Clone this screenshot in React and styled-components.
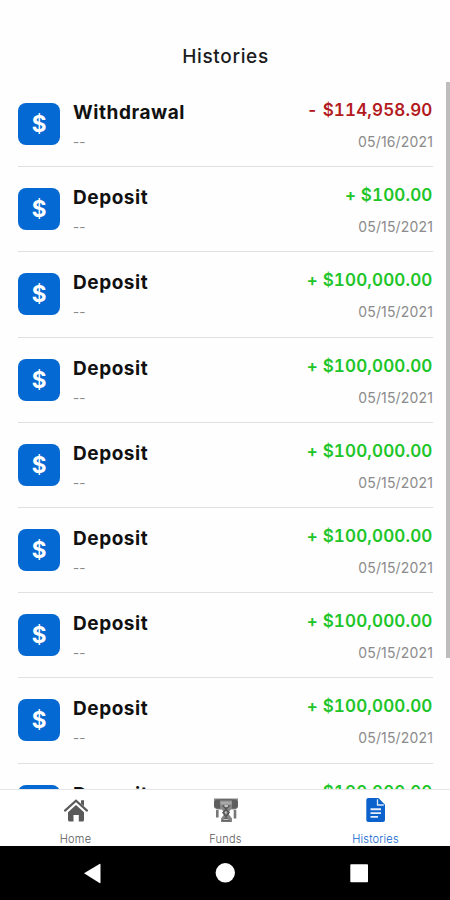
import React, { useState } from "react";
import styled, { createGlobalStyle } from "styled-components";

const GlobalStyle = createGlobalStyle`
  * {
    box-sizing: border-box;
  }
  body {
    margin: 0;
    background: #fff;
    font-family: Inter, "Liberation Sans", sans-serif;
  }
`;

const Screen = styled.div`
  position: relative;
  width: 450px;
  height: 900px;
  display: flex;
  flex-direction: column;
  overflow: hidden;
  background-color: #fefefe;
`;

const Header = styled.header`
  flex: 0 0 82px;
  padding-top: 44px;
  text-align: center;
`;

const Title = styled.h1`
  margin: 0;
  padding-left: 1px;
  font-size: 19px;
  line-height: 26px;
  font-weight: 500;
  letter-spacing: 0.65px;
  color: #1c1c1e;
`;

const List = styled.main`
  flex: 1 1 0;
  min-height: 0;
  overflow: hidden;
  padding: 0 17px 0 18px;
`;

const Row = styled.div`
  display: flex;
  height: 85.2px;
  padding-top: 21px;
  border-bottom: 1.5px solid #e0e0e1;
`;

const IconBox = styled.div`
  flex: 0 0 42px;
  height: 42px;
  border-radius: 8px;
  display: flex;
  align-items: center;
  justify-content: center;
  background-color: #0569d3;
  color: #fff;
  font-size: 22.5px;
  line-height: 42px;
  font-weight: 700;
`;

const Column = styled.div`
  display: flex;
  flex-direction: column;
  margin-left: ${(props) => (props.$right ? "auto" : "13px")};
  align-items: ${(props) => (props.$right ? "flex-end" : "flex-start")};
`;

const Name = styled.span`
  margin-top: -3px;
  height: 29px;
  font-size: 19px;
  line-height: 26px;
  font-weight: 650;
  letter-spacing: 0.55px;
  color: #111;
`;

const Note = styled.span`
  padding-top: 1px;
  font-size: 13.5px;
  line-height: 24px;
  color: #8b8b8b;
`;

const Amount = styled.span`
  margin-top: -5px;
  height: 31px;
  font-size: 17px;
  line-height: 25px;
  font-weight: 600;
  font-variant-numeric: tabular-nums;
  letter-spacing: 0.15px;
  margin-right: 0.5px;
  color: ${(props) => (props.$out ? "#b31a1e" : "#20c528")};
`;

const DateText = styled.span`
  padding-top: 1px;
  font-size: 14px;
  line-height: 24px;
  letter-spacing: 0.15px;
  color: #8b8b8b;
`;

const ScrollThumb = styled.div`
  position: absolute;
  top: 82px;
  right: 0;
  width: 4px;
  height: 576px;
  background-color: #bdbdbd;
`;

const TabBar = styled.nav`
  flex: 0 0 57.5px;
  display: flex;
  border-top: 1px solid #e6e6e6;
  background-color: #fff;
`;

const Tab = styled.button`
  flex: 1;
  display: flex;
  flex-direction: column;
  align-items: center;
  padding: 7px 0 0 1px;
  border: 0;
  background: none;
  font-family: inherit;
  color: ${(props) => (props.$active ? "#0b62cd" : "#5a5a5a")};
  svg {
    width: 26px;
    height: 26px;
  }
`;

const TabLabel = styled.span`
  margin-top: 9px;
  font-size: 11px;
  line-height: 14px;
  font-weight: 350;
  letter-spacing: 0.2px;
`;

const SystemBar = styled.div`
  flex: 0 0 54px;
  display: flex;
  align-items: center;
  background-color: #000;
  svg {
    width: 450px;
    height: 54px;
  }
`;

const HomeIcon = () => (
  <svg viewBox="0 0 26 26" fill="currentColor">
    <path d="M5 15.2 13 8l8 7.2V23a1.5 1.5 0 0 1-1.5 1.5h-3.7V18h-5.3v6.5H6.7A1.7 1.7 0 0 1 5 23z" />
    <path d="M2 13.6 13 3.6l11 10" fill="none" stroke="currentColor" strokeWidth="2.1" strokeLinecap="round" />
    <path d="M18 3.3h3v6l-3-2.7z" />
  </svg>
);

const FundsIcon = () => (
  <svg viewBox="0 0 26 26">
    <path d="M1 1.500h24v9l-2.500 2h-4.700L16 15v2.500l3 4V25H8v-3.500l3-4V15l-2.200-2.500H4L1 10.500z" fill="#858585" />
    <path d="M3 2.500h4v9H3L1 9V5zM19 2.500h4L25 5v4l-2 2.500h-4z" fill="#5e5e5e" />
    <path d="M7 2.700h12" stroke="#656565" strokeWidth="1.200" />
    <path d="M7.500 4.500h11v3h-11z" fill="#a8a8a8" />
    <path d="M10 8.500 13 12l3.500-3.500M10 15.500l3-3 3 3-3 4z" fill="none" stroke="#555" strokeWidth="1.500" />
    <path d="M11.500 9h3.500M12.900 14.500v2" stroke="#d5d5d5" strokeWidth="1.400" />
    <path d="M8 24.500 13 19.500l5 5z" fill="#666" />
    <path d="M10.500 22.500h5" stroke="#c4c4c4" />
    <path d="M4.300 13v7.500M22 13v8.500" stroke="#777" strokeWidth="2.600" />
  </svg>
);

const HistoryIcon = () => (
  <svg viewBox="0 0 26 26">
    <path d="M5.300 1H15.500l6.500 6.800V23a2 2 0 0 1-2 2H5.300a2 2 0 0 1-2-2V3a2 2 0 0 1 2-2z" fill="currentColor" />
    <path d="M14.500 2.300V8h6.300" fill="none" stroke="#dce9fa" strokeWidth="1.300" />
    <path d="M7.500 12.300h10.500M7.500 16.100h10.500M7.500 19.900h7.500" stroke="#e6f0fc" strokeWidth="1.900" />
  </svg>
);

const deposit = { name: "Deposit", amount: "+ $100,000.00", date: "05/15/2021" };

const histories = [
  { name: "Withdrawal", amount: "- $114,958.90", date: "05/16/2021", out: true },
  { name: "Deposit", amount: "+ $100.00", date: "05/15/2021" },
  ...Array(7).fill(deposit),
];

const tabs = [
  { label: "Home", Icon: HomeIcon },
  { label: "Funds", Icon: FundsIcon },
  { label: "Histories", Icon: HistoryIcon },
];

const App = () => {
  const [activeTab, setActiveTab] = useState("Histories");

  return (
    <Screen>
      <GlobalStyle />
      <Header>
        <Title>Histories</Title>
      </Header>
      <List>
        {histories.map((item, i) => (
          <Row key={i}>
            <IconBox>$</IconBox>
            <Column>
              <Name>{item.name}</Name>
              <Note>--</Note>
            </Column>
            <Column $right>
              <Amount $out={item.out}>{item.amount}</Amount>
              <DateText>{item.date}</DateText>
            </Column>
          </Row>
        ))}
      </List>
      <ScrollThumb />
      <TabBar>
        {tabs.map(({ label, Icon }) => (
          <Tab key={label} $active={activeTab === label} onClick={() => setActiveTab(label)}>
            <Icon />
            <TabLabel>{label}</TabLabel>
          </Tab>
        ))}
      </TabBar>
      <SystemBar>
        <svg viewBox="0 0 450 54" fill="#fff">
          <path d="M84 27.300 99.500 18q1-.5 1 .7v17.600q0 1.200-1 .7z" />
          <circle cx="225.300" cy="26.800" r="9.700" />
          <rect x="350.300" y="18.300" width="17.700" height="18" rx="0.800" />
        </svg>
      </SystemBar>
    </Screen>
  );
};

export default App;
